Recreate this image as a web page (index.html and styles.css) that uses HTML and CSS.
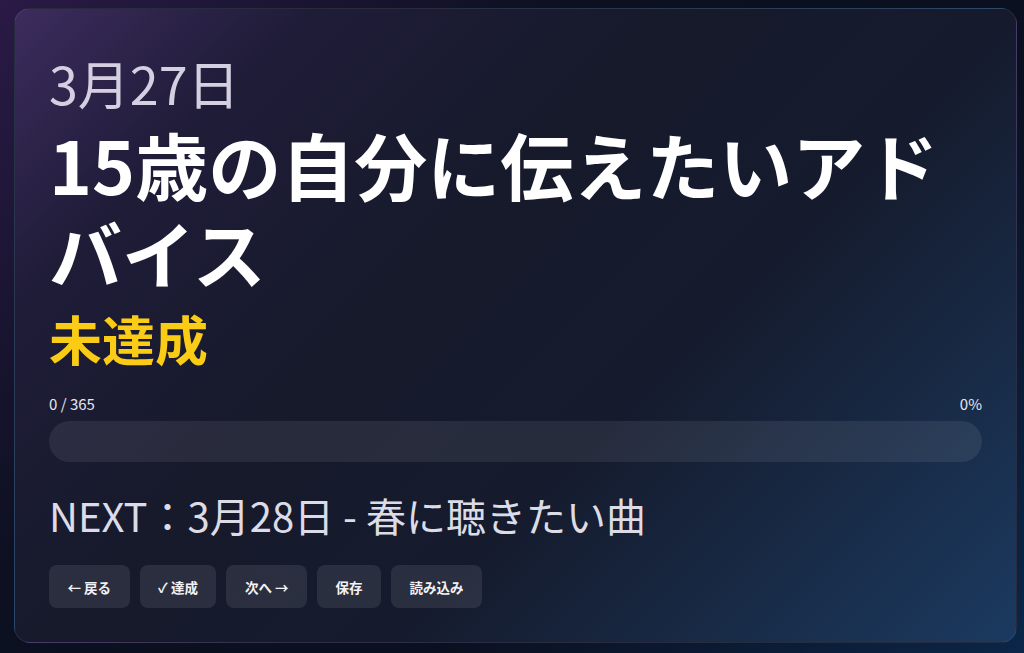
FILE: index.html
```html
<!DOCTYPE html>
<html lang="ja">
<head>
<meta charset="utf-8">
<title>365日</title>
<link rel="stylesheet" href="styles.css">
</head>
<body>
<main class="card">
  <div class="date">3月27日</div>
  <h1 class="title">15歳の自分に伝えたいアドバイス</h1>
  <div class="status">未達成</div>
  <div class="progress">
    <div class="progress-labels"><span>0 / 365</span><span>0%</span></div>
    <div class="bar"><div class="fill" style="width:0%"></div></div>
  </div>
  <div class="next">NEXT：3月28日 - 春に聴きたい曲</div>
  <div class="buttons">
    <button class="btn">← 戻る</button>
    <button class="btn">✓ 達成</button>
    <button class="btn">次へ →</button>
    <button class="btn">保存</button>
    <button class="btn">読み込み</button>
  </div>
</main>
</body>
</html>
```
FILE: styles.css
```css
html, body {
  margin: 0;
  height: 100%;
}
body {
  font-family: "Noto Sans CJK JP", "Noto Sans", sans-serif;
  background: linear-gradient(135deg, #2a1a46 0%, #0c1020 35%, #0b1020 65%, #0a2648 100%);
  padding: 8px 7px 10px 14px;
  box-sizing: border-box;
  overflow: hidden;
}
.card {
  box-sizing: border-box;
  height: 635px;
  border-radius: 16px;
  border: 1px solid rgba(255,255,255,0.08);
  background: linear-gradient(135deg, #3d2c5e 0%, #1f1c38 18%, #161a2b 40%, #151b2d 62%, #1b3a60 100%);
  padding: 45px 34px 0 34px;
  color: #fff;
}
.date {
  font-size: 52px;
  line-height: 58px;
  color: #d4d0e2;
  font-weight: 400;
}
.title {
  margin: 7px 0 0 0;
  font-size: 73px;
  line-height: 88px;
  font-weight: 700;
  color: #ffffff;
}
.status {
  margin-top: 11px;
  font-size: 53px;
  line-height: 64px;
  font-weight: 700;
  color: #facc15;
}
.progress {
  margin-top: 24px;
}
.progress-labels {
  display: flex;
  justify-content: space-between;
  font-size: 15px;
  line-height: 20px;
  color: #e6e6ee;
}
.bar {
  margin-top: 7px;
  height: 41px;
  border-radius: 21px;
  background: rgba(255,255,255,0.08);
  overflow: hidden;
}
.fill {
  height: 100%;
  background: #facc15;
}
.next {
  margin-top: 26px;
  font-size: 40px;
  line-height: 54px;
  color: #dcdce6;
}
.buttons {
  display: flex;
  gap: 10px;
  margin-top: 23px;
}
.btn {
  font-family: "Noto Sans CJK JP", "Noto Sans", sans-serif;
  font-size: 13.5px;
  font-weight: 700;
  color: #f2f2f6;
  background: rgba(255,255,255,0.09);
  border: none;
  border-radius: 8px;
  height: 43px;
  padding: 0 18.5px;
}
```
